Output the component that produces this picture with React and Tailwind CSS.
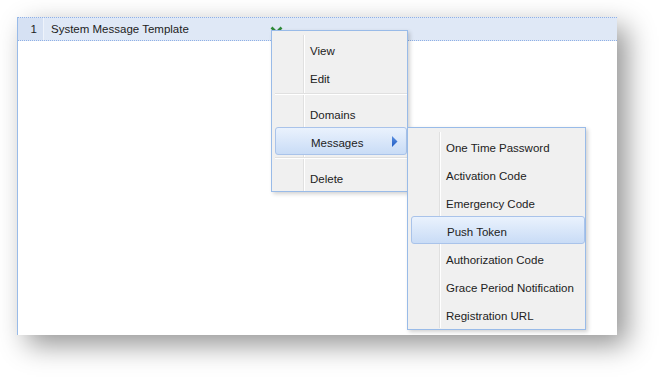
import React from 'react';

const mainItems = [
  { label: 'View' },
  { label: 'Edit' },
  { sep: true },
  { label: 'Domains' },
  { label: 'Messages', active: true, sub: true },
  { sep: true },
  { label: 'Delete' },
];

const subItems = [
  { label: 'One Time Password' },
  { label: 'Activation Code' },
  { label: 'Emergency Code' },
  { label: 'Push Token', active: true },
  { label: 'Authorization Code' },
  { label: 'Grace Period Notification' },
  { label: 'Registration URL' },
];

const MenuItem = ({ item }) => {
  if (item.sep) {
    return (
      <div className="relative flex h-[8px]">
        <div className="w-[32px] h-full border-r border-[#e0e0e0] shadow-[1px_0_0_#ffffff]" />
        <div className="absolute left-[3px] right-0 top-[2px] h-[2px] border-t border-[#e0e0e0] border-b border-b-white" />
      </div>
    );
  }
  if (item.active) {
    return (
      <div className="ml-[3px] flex items-center h-[28px] rounded-[3px] border border-[#a9c3ea] bg-linear-to-b from-[#eaf2fd] to-[#c9dcf6] pl-[35px] pr-[8px]">
        <span className="flex-1 pt-[5px]">{item.label}</span>
        {item.sub && (
          <svg width="6" height="11" viewBox="0 0 6 11">
            <defs>
              <linearGradient id="arr" x1="0" y1="0" x2="0" y2="1">
                <stop offset="0" stopColor="#5b8fe0" />
                <stop offset="1" stopColor="#1f5cc4" />
              </linearGradient>
            </defs>
            <path d="M0 0 L5.5 5.5 L0 11 Z" fill="url(#arr)" />
          </svg>
        )}
      </div>
    );
  }
  return (
    <div className="flex items-center h-[28px]">
      <div className="w-[32px] h-full border-r border-[#e0e0e0] shadow-[1px_0_0_#ffffff]" />
      <span className="pl-[6px] pt-[5px]">{item.label}</span>
    </div>
  );
};

const Menu = ({ items, className }) => (
  <div
    className={`absolute bg-[#f0f0f0] border border-[#99bbe8] pt-[4px] shadow-[2px_2px_4px_rgba(0,0,0,0.18)] ${className}`}
  >
    {items.map((item, i) => (
      <MenuItem key={i} item={item} />
    ))}
  </div>
);

export default function App() {
  return (
    <div
      className="w-[665px] h-[383px] bg-white pt-[17px] pl-[17px] text-[#222] text-[11.5px] overflow-hidden"
      style={{ fontFamily: '"Liberation Sans", Arial, sans-serif' }}
    >
      <div className="relative w-[600px] h-[318px] bg-white border-l border-[#99bbe8] shadow-[10px_10px_26px_rgba(0,0,0,0.42)]">
        <div className="flex h-[24px] bg-[#dfe8f6] border-t border-b border-dotted border-[#8fb0e6]">
          <div className="w-[26px] bg-[#d6e1f3] border-r border-[#eef3fb] text-right pr-[6px] leading-[22px]">
            1
          </div>
          <div className="pl-[7px] leading-[22px]">System Message Template</div>
        </div>

        <svg width="13" height="8" viewBox="0 0 13 8" className="absolute left-[252px] top-[9px]">
          <path d="M1.5 1.5 L6.5 6.5 L11.5 1.5" fill="none" stroke="#2f8a3a" strokeWidth="2.6" />
        </svg>

        <Menu items={mainItems} className="left-[253px] top-[13px] w-[137px]" />
        <Menu items={subItems} className="left-[389px] top-[110px] w-[179px] pb-[1px]" />
      </div>
    </div>
  );
}
